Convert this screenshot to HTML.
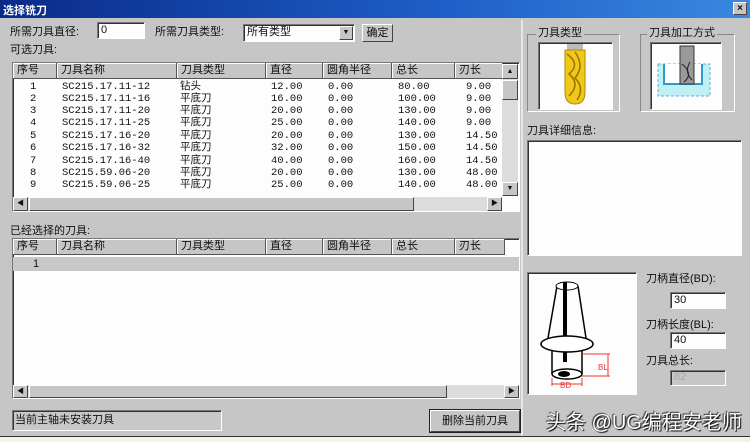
<!DOCTYPE html>
<html><head><meta charset="utf-8"><style>
*{margin:0;padding:0;box-sizing:border-box}
body{width:750px;height:442px;background:#c6c6c6;position:relative;overflow:hidden;font-family:"Liberation Sans","Noto Sans CJK SC",sans-serif;font-size:11px;color:#111}
.a{position:absolute;white-space:nowrap}
.sunk{border:1px solid;border-color:#777 #fff #fff #777;box-shadow:inset 1px 1px 0 #333}
.rais{border:1px solid;border-color:#fff #444 #444 #fff;background:#c6c6c6}
.white{background:#fdfdfd}
.hd{position:absolute;top:0;height:16px;border-right:1px solid #555;border-bottom:1px solid #555;background:#c6c6c6;padding-left:4px;line-height:15px;box-shadow:inset 1px 1px 0 #fff;white-space:nowrap}
.row{position:absolute;left:0;height:12px;line-height:12px;font-family:"Liberation Mono","Noto Sans CJK SC",monospace;font-size:10.5px;width:488px}
.row span{position:absolute;white-space:nowrap}
.grp{border:1px solid;border-color:#888 #fff #fff #888}
</style></head><body>
<div class="a" style="left:0;top:0;width:750px;height:18px;background:linear-gradient(90deg,#0a2a8a,#1e60c8 60%,#3a88e0)"></div>
<div class="a" style="left:3px;top:2px;color:#fff;font-size:11px;font-weight:bold">选择铣刀</div>
<div class="a rais" style="left:733px;top:2px;width:14px;height:13px;font-size:10px;line-height:11px;text-align:center;font-weight:bold">×</div>

<div class="a" style="left:10px;top:23px">所需刀具直径:</div>
<div class="a sunk white" style="left:97px;top:22px;width:48px;height:17px;padding-left:3px;line-height:14px">0</div>
<div class="a" style="left:155px;top:23px">所需刀具类型:</div>
<div class="a sunk white" style="left:243px;top:24px;width:112px;height:18px;padding-left:3px;line-height:15px">所有类型</div>
<div class="a rais" style="left:339px;top:26px;width:14px;height:14px;font-size:7px;text-align:center;line-height:12px">▼</div>
<div class="a rais" style="left:362px;top:24px;width:31px;height:18px;text-align:center;line-height:16px">确定</div>
<div class="a" style="left:10px;top:41px">可选刀具:</div>

<div class="a sunk white" style="left:12px;top:62px;width:508px;height:150px;overflow:hidden">
 <div class="hd" style="left:0;width:44px">序号</div>
 <div class="hd" style="left:44px;width:120px">刀具名称</div>
 <div class="hd" style="left:164px;width:89px">刀具类型</div>
 <div class="hd" style="left:253px;width:57px">直径</div>
 <div class="hd" style="left:310px;width:69px">圆角半径</div>
 <div class="hd" style="left:379px;width:63px">总长</div>
 <div class="hd" style="left:442px;width:48px">刃长</div>
</div>
<div class="a" style="left:13px;top:80px;width:488px;height:116px">
 <div class="row" style="top:1px"><span style="left:17px">1</span><span style="left:49px">SC215.17.11-12</span><span style="left:167px">钻头</span><span style="left:258px">12.00</span><span style="left:315px">0.00</span><span style="left:385px">80.00</span><span style="left:453px">9.00</span></div>
 <div class="row" style="top:13px"><span style="left:17px">2</span><span style="left:49px">SC215.17.11-16</span><span style="left:167px">平底刀</span><span style="left:258px">16.00</span><span style="left:315px">0.00</span><span style="left:385px">100.00</span><span style="left:453px">9.00</span></div>
 <div class="row" style="top:25px"><span style="left:17px">3</span><span style="left:49px">SC215.17.11-20</span><span style="left:167px">平底刀</span><span style="left:258px">20.00</span><span style="left:315px">0.00</span><span style="left:385px">130.00</span><span style="left:453px">9.00</span></div>
 <div class="row" style="top:37px"><span style="left:17px">4</span><span style="left:49px">SC215.17.11-25</span><span style="left:167px">平底刀</span><span style="left:258px">25.00</span><span style="left:315px">0.00</span><span style="left:385px">140.00</span><span style="left:453px">9.00</span></div>
 <div class="row" style="top:50px"><span style="left:17px">5</span><span style="left:49px">SC215.17.16-20</span><span style="left:167px">平底刀</span><span style="left:258px">20.00</span><span style="left:315px">0.00</span><span style="left:385px">130.00</span><span style="left:453px">14.50</span></div>
 <div class="row" style="top:62px"><span style="left:17px">6</span><span style="left:49px">SC215.17.16-32</span><span style="left:167px">平底刀</span><span style="left:258px">32.00</span><span style="left:315px">0.00</span><span style="left:385px">150.00</span><span style="left:453px">14.50</span></div>
 <div class="row" style="top:75px"><span style="left:17px">7</span><span style="left:49px">SC215.17.16-40</span><span style="left:167px">平底刀</span><span style="left:258px">40.00</span><span style="left:315px">0.00</span><span style="left:385px">160.00</span><span style="left:453px">14.50</span></div>
 <div class="row" style="top:87px"><span style="left:17px">8</span><span style="left:49px">SC215.59.06-20</span><span style="left:167px">平底刀</span><span style="left:258px">20.00</span><span style="left:315px">0.00</span><span style="left:385px">130.00</span><span style="left:453px">48.00</span></div>
 <div class="row" style="top:99px"><span style="left:17px">9</span><span style="left:49px">SC215.59.06-25</span><span style="left:167px">平底刀</span><span style="left:258px">25.00</span><span style="left:315px">0.00</span><span style="left:385px">140.00</span><span style="left:453px">48.00</span></div>
</div>
<div class="a" style="left:502px;top:64px;width:16px;height:132px;background:#dcdcdc"></div>
<div class="a rais" style="left:502px;top:64px;width:16px;height:15px;font-size:7px;text-align:center;line-height:13px">▲</div>
<div class="a rais" style="left:502px;top:80px;width:16px;height:20px"></div>
<div class="a rais" style="left:502px;top:182px;width:16px;height:14px;font-size:7px;text-align:center;line-height:12px">▼</div>
<div class="a" style="left:13px;top:197px;width:489px;height:14px;background:#dcdcdc"></div>
<div class="a rais" style="left:13px;top:197px;width:15px;height:14px;font-size:7px;text-align:center;line-height:12px">◀</div>
<div class="a rais" style="left:29px;top:197px;width:385px;height:14px"></div>
<div class="a rais" style="left:487px;top:197px;width:15px;height:14px;font-size:7px;text-align:center;line-height:12px">▶</div>

<div class="a" style="left:10px;top:222px">已经选择的刀具:</div>
<div class="a sunk white" style="left:12px;top:238px;width:508px;height:161px;overflow:hidden">
 <div class="hd" style="left:0;width:44px">序号</div>
 <div class="hd" style="left:44px;width:120px">刀具名称</div>
 <div class="hd" style="left:164px;width:89px">刀具类型</div>
 <div class="hd" style="left:253px;width:57px">直径</div>
 <div class="hd" style="left:310px;width:69px">圆角半径</div>
 <div class="hd" style="left:379px;width:63px">总长</div>
 <div class="hd" style="left:442px;width:50px">刃长</div>
 <div style="position:absolute;left:0;top:18px;width:506px;height:14px;background:#c8c8c8;padding-left:20px;line-height:14px">1</div>
</div>
<div class="a" style="left:13px;top:385px;width:506px;height:13px;background:#dcdcdc"></div>
<div class="a rais" style="left:13px;top:385px;width:15px;height:13px;font-size:7px;text-align:center;line-height:11px">◀</div>
<div class="a rais" style="left:29px;top:385px;width:418px;height:13px"></div>
<div class="a rais" style="left:504px;top:385px;width:15px;height:13px;font-size:7px;text-align:center;line-height:11px">▶</div>

<div class="a sunk" style="left:12px;top:410px;width:210px;height:21px;padding-left:2px;line-height:18px;background:#c8c8c8">当前主轴未安装刀具</div>
<div class="a rais" style="left:430px;top:410px;width:90px;height:22px;text-align:center;line-height:20px;box-shadow:0 0 0 1px #222">删除当前刀具</div>

<div class="a" style="left:521px;top:20px;width:2px;height:416px;background:#e6e6e6"></div>

<div class="a grp" style="left:527px;top:34px;width:93px;height:78px"></div>
<div class="a" style="left:536px;top:24px;background:#c6c6c6;padding:0 2px">刀具类型</div>
<div class="a sunk white" style="left:538px;top:42px;width:75px;height:68px"></div>
<svg class="a" style="left:555px;top:44px" width="40" height="62" viewBox="0 0 40 62">
<rect x="12" y="0" width="16" height="6" fill="#bbb"/>
<path d="M10 6 H30 V48 Q30 60 20 60 Q10 60 10 48 Z" fill="#f0c818" stroke="#b08a00"/>
<path d="M12 10 Q26 20 14 30 Q26 40 14 52 M20 8 Q30 22 20 34 Q30 44 22 56" stroke="#9a7000" fill="none" stroke-width="1.5"/>
</svg>
<div class="a grp" style="left:640px;top:34px;width:95px;height:78px"></div>
<div class="a" style="left:647px;top:24px;background:#c6c6c6;padding:0 2px">刀具加工方式</div>
<div class="a sunk white" style="left:650px;top:42px;width:72px;height:68px"></div>
<svg class="a" style="left:654px;top:44px" width="66" height="64" viewBox="0 0 66 64">
<path d="M4 20 H56 V52 H4 Z" fill="#bff0f4" stroke="#6ac" stroke-dasharray="3 2"/>
<path d="M10 20 V40 H48 V20" fill="#fff" stroke="#39c" stroke-width="2"/>
<rect x="26" y="2" width="14" height="38" fill="#999" stroke="#333"/>
<path d="M28 20 Q40 30 30 38 M36 18 Q30 28 38 36" stroke="#222" fill="none"/>
</svg>
<div class="a" style="left:527px;top:122px">刀具详细信息:</div>
<div class="a sunk white" style="left:527px;top:140px;width:215px;height:116px"></div>

<div class="a sunk white" style="left:527px;top:272px;width:110px;height:123px"></div>
<svg class="a" style="left:540px;top:278px" width="85" height="112" viewBox="0 0 85 112">
<path d="M17 8 L8 60 M38 8 L46 60" stroke="#000" fill="none" stroke-width="1.5"/>
<ellipse cx="27" cy="8" rx="11" ry="4" fill="#fff" stroke="#000"/>
<path d="M25 4 V84" stroke="#000" stroke-width="4"/>
<ellipse cx="27" cy="66" rx="26" ry="8" fill="#fff" stroke="#000" stroke-width="1.5"/>
<path d="M12 72 V96 M42 72 V96" stroke="#000" stroke-width="1.5"/>
<ellipse cx="27" cy="96" rx="15" ry="5" fill="#fff" stroke="#000" stroke-width="1.5"/>
<ellipse cx="24" cy="96" rx="6" ry="3" fill="#000"/>
<path d="M42 76 H70 M42 98 H70 M68 76 V98 M12 100 V108 M42 100 V108 M12 106 H42" stroke="#e33" fill="none"/>
<text x="58" y="92" font-size="8" fill="#e33" font-family="Liberation Sans">BL</text>
<text x="20" y="110" font-size="8" fill="#e33" font-family="Liberation Sans">BD</text>
</svg>
<div class="a" style="left:646px;top:270px">刀柄直径(BD):</div>
<div class="a sunk white" style="left:670px;top:292px;width:56px;height:17px;padding-left:3px;line-height:14px">30</div>
<div class="a" style="left:646px;top:316px">刀柄长度(BL):</div>
<div class="a sunk white" style="left:670px;top:332px;width:56px;height:17px;padding-left:3px;line-height:14px">40</div>
<div class="a" style="left:646px;top:352px">刀具总长:</div>
<div class="a sunk" style="left:670px;top:370px;width:56px;height:16px;padding-left:3px;line-height:13px;color:#aaa">82</div>
<div class="a" style="left:0;top:436px;width:750px;height:6px;background:#eef6ea;border-top:1px solid #333"></div>
<div class="a" style="left:546px;top:406px;font-size:20px;color:#fff;text-shadow:1px 1px 1px #000,-1px -1px 1px #333;font-family:'Liberation Sans','Noto Sans CJK SC',sans-serif">头条 @UG编程安老师</div>
</body></html>
